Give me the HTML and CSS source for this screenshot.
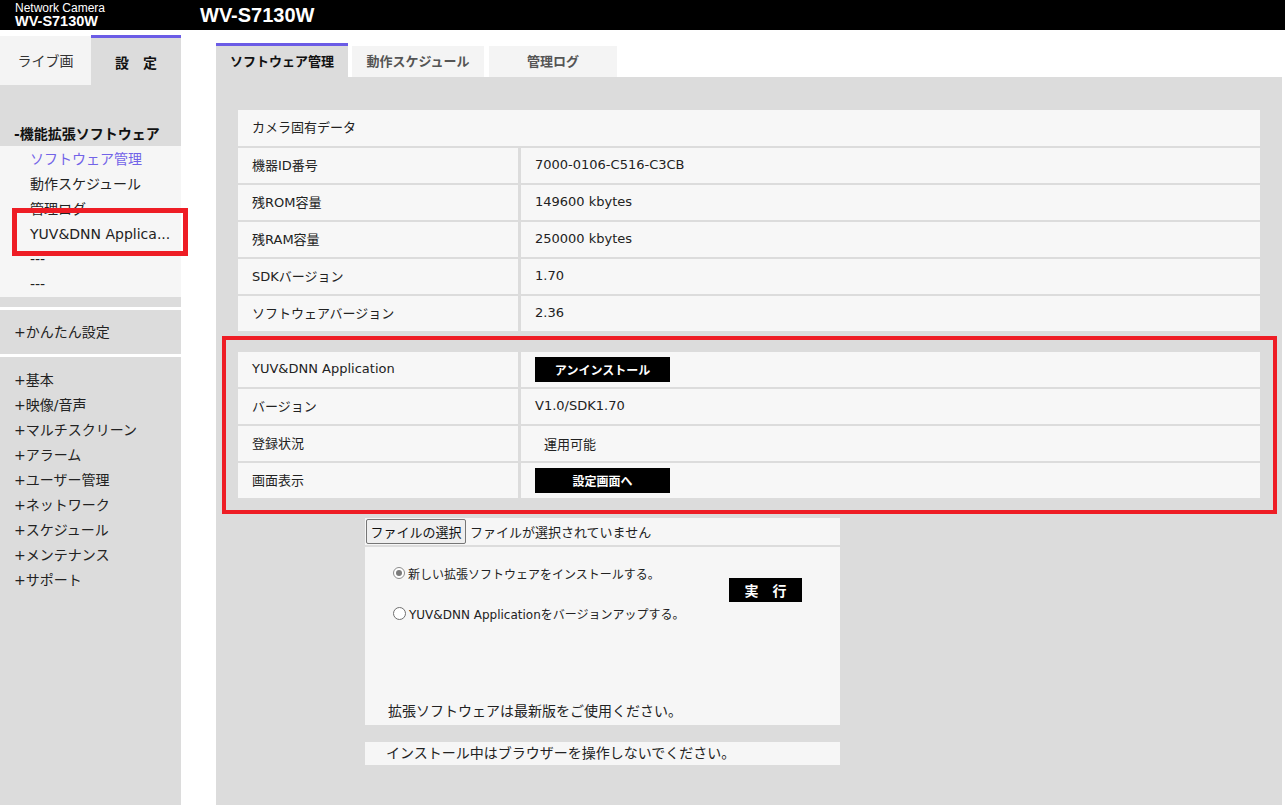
FILE: index.html
```html
<!DOCTYPE html>
<html lang="ja">
<head>
<meta charset="utf-8">
<title>WV-S7130W</title>
<link rel="stylesheet" href="styles.css">
</head>
<body>
<header class="header">
  <div class="brand">
    <div class="brand-sub">Network Camera</div>
    <div class="brand-model">WV-S7130W</div>
  </div>
  <div class="title">WV-S7130W</div>
</header>
<div class="page">
  <aside class="sidebar">
    <div class="side-tabs">
      <div class="side-tab live">ライブ画</div>
      <div class="side-tab active">設　定</div>
    </div>
    <div class="side-body">
      <div class="side-head">-機能拡張ソフトウェア</div>
      <ul class="side-sub">
        <li class="current">ソフトウェア管理</li>
        <li>動作スケジュール</li>
        <li>管理ログ</li>
        <li>YUV&amp;DNN Applica...</li>
        <li>---</li>
        <li>---</li>
      </ul>
      <div class="side-spacer"></div>
      <div class="side-easy">+かんたん設定</div>
      <ul class="side-list">
        <li>+基本</li>
        <li>+映像/音声</li>
        <li>+マルチスクリーン</li>
        <li>+アラーム</li>
        <li>+ユーザー管理</li>
        <li>+ネットワーク</li>
        <li>+スケジュール</li>
        <li>+メンテナンス</li>
        <li>+サポート</li>
      </ul>
    </div>
  </aside>
  <div class="gutter"></div>
  <main class="main">
    <nav class="main-tabs">
      <div class="mtab active">ソフトウェア管理</div>
      <div class="mtab second">動作スケジュール</div>
      <div class="mtab third">管理ログ</div>
    </nav>
    <section class="main-body">
      <div class="info-table">
        <div class="cell head">カメラ固有データ</div>
        <div class="cell">機器ID番号</div><div class="cell val">7000-0106-C516-C3CB</div>
        <div class="cell">残ROM容量</div><div class="cell val">149600 kbytes</div>
        <div class="cell">残RAM容量</div><div class="cell val">250000 kbytes</div>
        <div class="cell">SDKバージョン</div><div class="cell val">1.70</div>
        <div class="cell">ソフトウェアバージョン</div><div class="cell val">2.36</div>
      </div>
      <div class="info-table app-table">
        <div class="cell">YUV&amp;DNN Application</div><div class="cell val btn-cell"><span class="black-btn">アンインストール</span></div>
        <div class="cell">バージョン</div><div class="cell val">V1.0/SDK1.70</div>
        <div class="cell">登録状況</div><div class="cell val indent">運用可能</div>
        <div class="cell">画面表示</div><div class="cell val btn-cell"><span class="black-btn">設定画面へ</span></div>
      </div>
      <div class="file-area">
        <div class="file-row">
          <button class="file-btn" type="button">ファイルの選択</button>
          <span class="file-name">ファイルが選択されていません</span>
        </div>
        <div class="install-box">
          <div class="install-main">
            <div class="options">
              <div class="option"><span class="radio checked"></span>新しい拡張ソフトウェアをインストールする。</div>
              <div class="option second"><span class="radio"></span>YUV&amp;DNN Applicationをバージョンアップする。</div>
            </div>
            <span class="exec-btn">実　行</span>
          </div>
          <div class="note">拡張ソフトウェアは最新版をご使用ください。</div>
        </div>
        <div class="warn">インストール中はブラウザーを操作しないでください。</div>
      </div>
    </section>
  </main>
</div>
<div class="mark mark-side"></div>
<div class="mark mark-main"></div>
</body>
</html>
```
FILE: styles.css
```css
html, body {
  margin: 0;
  padding: 0;
}
body {
  width: 1285px;
  height: 805px;
  overflow: hidden;
  background: #fff;
  color: #222;
  font-family: "DejaVu Sans", "Noto Sans CJK JP", sans-serif;
  position: relative;
}
ul {
  list-style: none;
  margin: 0;
  padding: 0;
}

/* header */
.header {
  height: 30px;
  background: #000;
  color: #fff;
  display: flex;
  font-family: "Liberation Sans", Arial, sans-serif;
}
.brand {
  width: 200px;
  box-sizing: border-box;
  padding-left: 15px;
  padding-top: 2px;
}
.brand-sub {
  font-size: 12px;
  line-height: 12px;
}
.brand-model {
  font-size: 14.5px;
  font-weight: bold;
  line-height: 15px;
}
.title {
  font-size: 20px;
  font-weight: bold;
  line-height: 31px;
}

/* layout */
.page {
  display: flex;
  height: 775px;
}
.sidebar {
  width: 181px;
  display: flex;
  flex-direction: column;
}
.gutter {
  width: 35px;
}
.main {
  width: 1066px;
  display: flex;
  flex-direction: column;
}

/* sidebar */
.side-tabs {
  display: flex;
  align-items: flex-end;
  margin-top: 5px;
  height: 50px;
}
.side-tab {
  display: flex;
  align-items: center;
  justify-content: center;
  font-size: 14px;
  box-sizing: border-box;
}
.side-tab.live {
  width: 91px;
  height: 49px;
  background: #f4f4f4;
  color: #333;
  padding-bottom: 1px;
}
.side-tab.active {
  width: 90px;
  height: 50px;
  background: #dcdcdc;
  border-top: 3px solid #6b5ce6;
  font-weight: bold;
  color: #111;
}
.side-body {
  flex: 1;
  background: #dcdcdc;
  display: flex;
  flex-direction: column;
}
.side-head {
  height: 61px;
  box-sizing: border-box;
  padding: 37px 0 0 14px;
  font-size: 14px;
  font-weight: bold;
  line-height: 24px;
  color: #111;
}
.side-sub {
  background: #f6f6f6;
  padding-bottom: 1px;
}
.side-sub li {
  height: 25px;
  line-height: 26px;
  padding-left: 30px;
  font-size: 14px;
  color: #222;
  white-space: nowrap;
}
.side-sub li.current {
  color: #7263e8;
}
.side-spacer {
  height: 10px;
}
.side-easy {
  border-top: 3px solid #fff;
  height: 44px;
  line-height: 44px;
  padding-left: 14px;
  font-size: 14px;
}
.side-list {
  border-top: 3px solid #fff;
  padding-top: 11px;
}
.side-list li {
  height: 25px;
  line-height: 25px;
  padding-left: 14px;
  font-size: 14px;
}

/* main tabs */
.main-tabs {
  display: flex;
  align-items: flex-end;
  margin-top: 13px;
  height: 34px;
}
.mtab {
  width: 132px;
  height: 31px;
  box-sizing: border-box;
  background: #f4f4f4;
  display: flex;
  align-items: center;
  justify-content: center;
  font-size: 13px;
  font-weight: bold;
  color: #555;
  padding-bottom: 2px;
}
.mtab.active {
  height: 34px;
  background: #dcdcdc;
  border-top: 3px solid #6b5ce6;
  color: #111;
}
.mtab.second {
  margin-left: 4px;
}
.mtab.third {
  margin-left: 5px;
  width: 128px;
}

/* main body */
.main-body {
  flex: 1;
  background: #dcdcdc;
  padding: 33px 22px 0 22px;
}
.info-table {
  display: grid;
  grid-template-columns: 280px 1fr;
  column-gap: 3px;
  row-gap: 2px;
}
.app-table {
  margin-top: 21px;
}
.cell {
  height: 35px;
  box-sizing: border-box;
  background: #f7f7f7;
  display: flex;
  align-items: center;
  padding-left: 14px;
  padding-bottom: 3px;
  font-size: 13px;
  color: #222;
}
.cell.head {
  grid-column: 1 / -1;
  height: 36px;
  padding-bottom: 4px;
}
.cell.btn-cell {
  padding-bottom: 0;
}
.cell.indent {
  padding-left: 23px;
  padding-bottom: 1px;
}
.black-btn {
  width: 135px;
  height: 25px;
  background: #000;
  color: #fff;
  font-size: 12px;
  font-weight: bold;
  display: flex;
  align-items: center;
  justify-content: center;
}

/* file area */
.file-area {
  margin-left: 127px;
  margin-top: 20px;
  width: 475px;
}
.file-row {
  height: 27px;
  background: #f6f6f6;
  display: flex;
  align-items: center;
}
.file-btn {
  margin: 0 0 0 1px;
  height: 25px;
  width: 100px;
  padding: 0;
  background: #efefef;
  border: 1px solid #767676;
  border-radius: 2px;
  font-family: "DejaVu Sans", "Noto Sans CJK JP", sans-serif;
  font-size: 13px;
  color: #111;
}
.file-name {
  margin-left: 4px;
  font-size: 13px;
}
.install-box {
  margin-top: 2px;
  height: 178px;
  background: #f6f6f6;
  display: flex;
  flex-direction: column;
}
.install-main {
  display: flex;
  padding: 17px 0 0 28px;
}
.options {
  width: 336px;
}
.option {
  display: flex;
  align-items: center;
  height: 18px;
  font-size: 12px;
  white-space: nowrap;
}
.option.second {
  margin-top: 22px;
}
.radio {
  width: 11px;
  height: 11px;
  border: 1px solid #6f6f6f;
  border-radius: 50%;
  background: #fff;
  margin-right: 3px;
  position: relative;
  flex: none;
}
.radio.checked {
  border-color: #8c8c8c;
  border-width: 1.5px;
  width: 10px;
  height: 10px;
}
.radio.checked::after {
  content: "";
  position: absolute;
  left: 2px;
  top: 2px;
  width: 6px;
  height: 6px;
  border-radius: 50%;
  background: #7b7b7b;
}
.exec-btn {
  margin-top: 14px;
  width: 73px;
  height: 24px;
  background: #000;
  color: #fff;
  font-size: 14px;
  font-weight: bold;
  display: flex;
  align-items: center;
  justify-content: center;
}
.note {
  margin-top: auto;
  padding: 0 0 4px 23px;
  line-height: 20px;
  font-size: 14px;
}
.warn {
  margin-top: 17px;
  height: 23px;
  line-height: 23px;
  background: #f6f6f6;
  padding-left: 21px;
  font-size: 14px;
}

/* annotation overlays */
.mark {
  position: absolute;
  border: 5px solid #ee1d25;
  box-sizing: border-box;
  pointer-events: none;
}
.mark-side {
  left: 12px;
  top: 208px;
  width: 176px;
  height: 48px;
}
.mark-main {
  left: 222px;
  top: 336px;
  width: 1055px;
  height: 178px;
  border-width: 4px;
}
```
